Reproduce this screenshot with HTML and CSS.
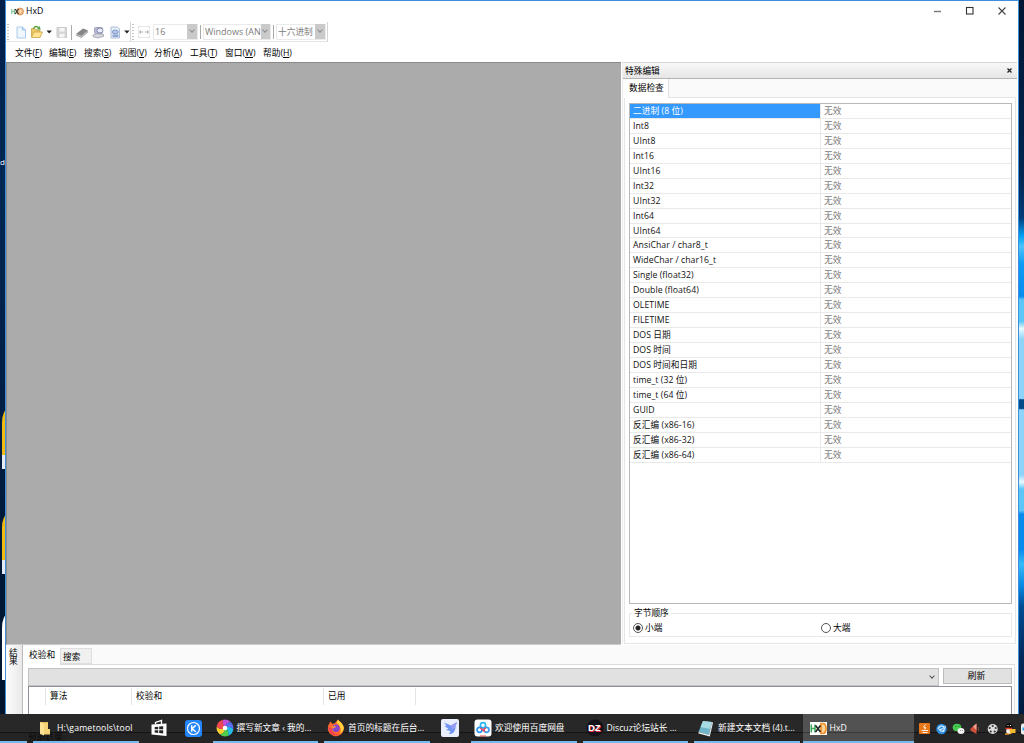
FILE: index.html
```
<!DOCTYPE html>
<html lang="zh-CN">
<head>
    <meta charset="utf-8">
    <title>HxD</title>
    <link rel="stylesheet" href="styles.css">
</head>
<body>
<div class="desktop">
    <div class="wall-left">
        <span class="shortcut-text">d</span>
        <i class="shortcut yellow s1"></i>
        <i class="shortcut yellow s2"></i>
        <i class="shortcut s3"></i>
    </div>

    <div class="window">
        <div class="titlebar">
            <svg class="app-icon" width="13" height="9" viewBox="0 0 13 9">
                <circle cx="9" cy="4.500" r="3.500" fill="#f3b47c" stroke="#cf8444" stroke-width=".7"/>
                <path d="M.8 2v5M3.400 2v5M.8 4.500h2.600" stroke="#7cc08f" stroke-width="1.100"/>
                <path d="M4 2l3.500 5M7.500 2L4 7" stroke="#333" stroke-width="1.200"/>
                <path d="M8.500 2.800c3-.4 3 3.500 0 3.200z" fill="#fde0b8"/>
            </svg>
            <span class="title">HxD</span>
            <svg class="caption-buttons" width="74" height="10" viewBox="0 0 74 10">
                <path d="M0 5.500h7" stroke="#777" stroke-width="1.400"/>
                <rect x="32.500" y="1.500" width="6.500" height="6.500" fill="none" stroke="#333" stroke-width="1.100"/>
                <path d="M64.500 1.500l7 7M71.500 1.500l-7 7" stroke="#444" stroke-width="1.100"/>
            </svg>
        </div>

        <div class="toolbars">
            <div class="toolbar file-bar">
                <svg width="120" height="16" viewBox="13.500 24 120 16">
                    <path d="M15.500 27h5.500l3 3v8h-8.500z" fill="#eef7fe" stroke="#a3c6ea" stroke-width=".9"/>
                    <path d="M21 27v3h3" fill="#b9dbf7" stroke="#8ab4de" stroke-width=".7"/>
                    <path d="M30 37v-8.500h3.500l1 1.500h4V32" fill="#ecc766" stroke="#c9a548" stroke-width=".8"/>
                    <path d="M30 37.500l2.500-5.500h8.500l-2.500 5.500z" fill="#ffe391" stroke="#c9a548" stroke-width=".8"/>
                    <path d="M32 28.500c1-2.500 4-2.500 5-.5" fill="none" stroke="#56a544" stroke-width="1.400"/>
                    <path d="M35.200 29.500h4l-1-3.500z" fill="#56a544"/>
                    <path d="M45 30.500h5.400L47.700 33.500z" fill="#222"/>
                    <path d="M55.500 27.500h9.500v10h-8.500l-1-1z" fill="#d6d6d6" stroke="#cacaca"/>
                    <path d="M58 28h5v3.500h-5zM58 34h5v3.500h-5z" fill="#f6f6f6"/>
                    <path d="M70 25v15" stroke="#aaa"/>
                    <path d="M74.500 34l7-5.500 5 2-6.500 5.500z" fill="#858585"/>
                    <path d="M74.500 34v1.700l5.500 2.300v-2zM80 36l6.500-5.500v2L80 38z" fill="#b0b0b0"/>
                    <rect x="93" y="27.500" width="8" height="6" rx="1" fill="#b6bada" stroke="#9797ad" stroke-width=".8"/>
                    <ellipse cx="98.500" cy="30.500" rx="3" ry="2.500" fill="#e9eafa" stroke="#777a9e" stroke-width=".8"/>
                    <path d="M91.500 35l4-1.500 6.500 1v2l-6 1.500-4.500-1.500z" fill="#d6d6df" stroke="#9f9fac" stroke-width=".8"/>
                    <path d="M109.500 27h6.500l2 2v9h-8.500z" fill="#e7effa" stroke="#aebfd6"/>
                    <ellipse cx="113.800" cy="32" rx="3" ry="2" fill="#b4c4e6" stroke="#7390c2" stroke-width=".8"/>
                    <path d="M111 34.500h6v2.500h-6z" fill="#8fa6d2"/>
                    <path d="M122.700 30.500h5.400l-2.700 3z" fill="#222"/>
                </svg>
            </div>
            <div class="toolbar view-bar">
                <svg width="12" height="12" viewBox="0 0 12 12">
                    <path d="M.5.500v11M11.500.500v11M.5.500h11M.5 11.500h11" stroke="#ddd" stroke-dasharray="2 1"/>
                    <path d="M1.500 6h3.500M7 6h3.500" stroke="#b4b4b4"/>
                    <path d="M1 6l2-2v4zM11 6L9 4v4z" fill="#b4b4b4"/>
                </svg>
                <div class="combo c-width"><span>16</span><i><b></b></i></div>
                <div class="combo c-charset"><span>Windows (AN</span><i><b></b></i></div>
                <div class="combo c-base"><span>十六进制</span><i><b></b></i></div>
            </div>
        </div>

        <div class="menubar">
            <span>文件(<u>F</u>)</span>
            <span>编辑(<u>E</u>)</span>
            <span>搜索(<u>S</u>)</span>
            <span>视图(<u>V</u>)</span>
            <span>分析(<u>A</u>)</span>
            <span>工具(<u>T</u>)</span>
            <span>窗口(<u>W</u>)</span>
            <span>帮助(<u>H</u>)</span>
        </div>

        <div class="main">
            <div class="mdi"></div>
            <div class="inspector">
                <div class="dock-title">
                    <span>特殊编辑</span>
                    <svg width="5" height="5" viewBox="0 0 5 5"><path d="M.5.500l4 4M4.500.500l-4 4" stroke="#222" stroke-width="1.300"/></svg>
                </div>
                <div class="tab-strip"><span class="tab">数据检查</span></div>
                <div class="tab-page">
                    <div class="data-list">
                        <div class="row selected"><span>二进制 (8 位)</span><span>无效</span></div>
                        <div class="row"><span>Int8</span><span>无效</span></div>
                        <div class="row"><span>UInt8</span><span>无效</span></div>
                        <div class="row"><span>Int16</span><span>无效</span></div>
                        <div class="row"><span>UInt16</span><span>无效</span></div>
                        <div class="row"><span>Int32</span><span>无效</span></div>
                        <div class="row"><span>UInt32</span><span>无效</span></div>
                        <div class="row"><span>Int64</span><span>无效</span></div>
                        <div class="row"><span>UInt64</span><span>无效</span></div>
                        <div class="row"><span>AnsiChar / char8_t</span><span>无效</span></div>
                        <div class="row"><span>WideChar / char16_t</span><span>无效</span></div>
                        <div class="row"><span>Single (float32)</span><span>无效</span></div>
                        <div class="row"><span>Double (float64)</span><span>无效</span></div>
                        <div class="row"><span>OLETIME</span><span>无效</span></div>
                        <div class="row"><span>FILETIME</span><span>无效</span></div>
                        <div class="row"><span>DOS 日期</span><span>无效</span></div>
                        <div class="row"><span>DOS 时间</span><span>无效</span></div>
                        <div class="row"><span>DOS 时间和日期</span><span>无效</span></div>
                        <div class="row"><span>time_t (32 位)</span><span>无效</span></div>
                        <div class="row"><span>time_t (64 位)</span><span>无效</span></div>
                        <div class="row"><span>GUID</span><span>无效</span></div>
                        <div class="row"><span>反汇编 (x86-16)</span><span>无效</span></div>
                        <div class="row"><span>反汇编 (x86-32)</span><span>无效</span></div>
                        <div class="row"><span>反汇编 (x86-64)</span><span>无效</span></div>
                    </div>
                    <div class="byte-order">
                        <span class="legend">字节顺序</span>
                        <label><i class="radio checked"></i>小端</label>
                        <label><i class="radio"></i>大端</label>
                    </div>
                </div>
            </div>
        </div>

        <div class="results">
            <div class="side-title">结果</div>
            <div class="results-body">
                <div class="results-tabs">
                    <span class="tab">校验和</span>
                    <span class="tab inactive">搜索</span>
                </div>
                <div class="results-page">
                    <div class="controls">
                        <div class="wide-combo"><b></b></div>
                        <div class="refresh">刷新</div>
                    </div>
                    <div class="sum-list">
                        <span></span>
                        <span>算法</span>
                        <span>校验和</span>
                        <span>已用</span>
                    </div>
                </div>
            </div>
        </div>
    </div>

    <div class="wall-right"></div>
</div>

<div class="taskbar">
    <span class="behind">预期结果:</span>
    <div class="task t-start"></div>
    <div class="task t-wide open">
        <svg width="18" height="18" viewBox="0 0 18 18">
            <path d="M4 3h8v12H4z" fill="#e6bd55"/><path d="M4 3l4 1.500v12L4 15z" fill="#fbe294"/><path d="M8 4h4v11.500H8zM12 10h2v5.500h-2z" fill="#f4d277"/>
        </svg>
        <span class="path">H:\gametools\tool</span>
    </div>
    <div class="task t-store">
        <svg width="18" height="18" viewBox="0 0 18 18">
            <path d="M1.500 5.500l15-1v12.500l-15-1.500z" fill="#fff"/>
            <path d="M5.500 5V3.500l6-2V5" fill="none" stroke="#fff" stroke-width="1.300"/>
            <path d="M4.700 8l3.500-.3v2.600H4.700zM9.200 7.600l4-.4v3.100h-4zM4.700 11.200h3.500v2.700l-3.500-.4zM9.200 11.200h4v3.300l-4-.4z" fill="#252525"/>
        </svg>
    </div>
    <div class="task t-k">
        <svg width="17" height="17" viewBox="0 0 17 17">
            <rect width="17" height="17" rx="3" fill="#2385fa"/>
            <circle cx="8.500" cy="8.500" r="6" fill="none" stroke="#fff" stroke-width="1.200"/>
            <path d="M6.700 5.200v6.600M10.800 5.200L7.200 8.700l3.600 3.100" fill="none" stroke="#fff" stroke-width="1.500"/>
        </svg>
    </div>
    <div class="task t-wide open">
        <svg width="18" height="18" viewBox="0 0 18 18">
            <path d="M7 .8A8.400 8.400 0 0 1 15 3.200C12 3 10 4.500 9 9 7 6 6 3.500 7 .8z" fill="#c04fd8"/>
            <path d="M15 3.200a8.400 8.400 0 0 1 2.300 7.500C15.500 8 13 7.200 9 9c1-4.500 3-6 6-5.800z" fill="#5a6cf0"/>
            <path d="M17.300 10.700a8.400 8.400 0 0 1-5.600 6.300C13 14 12.500 11.500 9 9c4-1.800 6.500-1 8.300 1.700z" fill="#25bde8"/>
            <path d="M11.700 17a8.400 8.400 0 0 1-8-1.800C7 15 8.500 13 9 9c3.500 2.500 4 5 2.700 8z" fill="#4fcd4c"/>
            <path d="M3.700 15.200A8.400 8.400 0 0 1 .7 7.500C3 10.200 5 10.500 9 9c-.5 4-2 6-5.300 6.200z" fill="#f8cf33"/>
            <path d="M.7 7.500A8.400 8.400 0 0 1 7 .8C6 3.500 7 6 9 9c-4 1.500-6 1.200-8.300-1.500z" fill="#f3484f"/>
            <circle cx="9" cy="9" r="2.300" fill="#fff"/>
        </svg>
        <span>撰写新文章 ‹ 我的...</span>
    </div>
    <div class="task t-wide open">
        <svg width="18" height="18" viewBox="0 0 18 18">
            <path d="M2 5l1.500-2.500L5.500 5 8 4l3-3.500c1 2 5 3.500 5.800 8A8 8 0 1 1 2 5z" fill="#ff6a2b"/>
            <path d="M11 .5c1 2 5 3.500 5.800 8 0 3-2 5-3.500 6C15 9 12 5 9.500 4z" fill="#ffd33c"/>
            <path d="M1.500 8c.2 7 6 10 11 7.500-5 0-8-2-8-6z" fill="#f23b58"/>
            <circle cx="9" cy="9.300" r="3.700" fill="#8546cf"/>
            <path d="M4.500 7.500L9 7c0 1.500-2.500 1.500-2.500 3z" fill="#ff9e33"/>
        </svg>
        <span>首页的标题在后台...</span>
    </div>
    <div class="task t-bird">
        <svg width="18" height="18" viewBox="0 0 18 18">
            <rect width="18" height="18" rx="2" fill="#e9eefc"/>
            <path d="M3 3.500l7 3 6-3.500-1.500 4.500c0 5-2.500 7.500-6.500 7.500l1.500-3-4.500-1 2.500-1.500-4-2 2-.5z" fill="#6f94f4"/>
            <path d="M10 6.500L16 3l-1.500 4.500L11 11z" fill="#9a9cf8"/>
        </svg>
    </div>
    <div class="task t-wide open">
        <svg width="18" height="18" viewBox="0 0 18 18">
            <rect x=".5" y=".5" width="17" height="17" rx="3" fill="#fff"/>
            <circle cx="9" cy="6.200" r="2.600" fill="none" stroke="#27b9f3" stroke-width="1.700"/>
            <circle cx="5.500" cy="10.800" r="2.500" fill="none" stroke="#2b95f6" stroke-width="1.700"/>
            <circle cx="12.500" cy="10.800" r="2.500" fill="none" stroke="#3b9cf5" stroke-width="1.700"/>
            <path d="M6.500 9.200l4.500 3.500M11.500 8.800L9.500 11" stroke="#f0495b" stroke-width="1.500"/>
            <path d="M6 17h6" stroke="#e64545"/>
        </svg>
        <span>欢迎使用百度网盘</span>
    </div>
    <div class="task t-wide open">
        <svg width="18" height="18" viewBox="0 0 18 18">
            <circle cx="9" cy="9" r="8.500" fill="#141018"/>
            <text x="2.600" y="12.800" class="dz-red">DZ</text>
            <text x="2" y="12.400" class="dz">DZ</text>
        </svg>
        <span>Discuz论坛站长 ...</span>
    </div>
    <div class="task t-wide open">
        <svg width="18" height="18" viewBox="0 0 18 18">
            <path d="M6 2l9 1-3 13.500L1.500 13z" fill="#6fb4c8"/><path d="M6 2l9 1-2 7-9.500-2z" fill="#a9dbe4"/>
            <path d="M1.500 13L12 16l3-13 1 .8-3.200 13.700L1.500 14.500z" fill="#eee"/>
        </svg>
        <span>新建文本文档 (4).t...</span>
    </div>
    <div class="task t-hxd open">
        <svg width="17" height="13" viewBox="0 0 17 13">
            <rect width="17" height="13" fill="#fff"/>
            <path d="M1.300 2.500v8M5 2.500v8M1.300 6.500H5" stroke="#35a857" stroke-width="1.500"/>
            <path d="M11 1.500h2c4 0 4 10 0 10h-2z" fill="#fbd29a" stroke="#f09125" stroke-width="1.700"/>
            <path d="M5.500 3.500l5 6.500M10.500 3.500l-5 6.500" stroke="#222" stroke-width="1.600"/>
        </svg>
        <span>HxD</span>
    </div>
    <svg class="tray" width="106" height="14" viewBox="918 722 106 14">
        <rect x="919" y="723" width="11" height="11" rx="1" fill="#e87817"/>
        <path d="M925.500 724.500l-2 2.500 2.500 1-2 1.500M921.500 730.500h6.500M922.500 732.500h5" fill="none" stroke="#fff" stroke-width=".9"/>
        <circle cx="941.500" cy="729" r="5.200" fill="#2e8fe0"/>
        <path d="M938 729c1-3 5-4 5.500-2s-3 2.500-4 2.500c1 2.500 3.500 2 5 .5M943 732l2.500-6" fill="none" stroke="#d9f1ff" stroke-width="1.100"/>
        <ellipse cx="957" cy="727.500" rx="4.300" ry="3.700" fill="#44cb4d"/>
        <ellipse cx="961" cy="731" rx="3.500" ry="3" fill="#f2f2f2"/>
        <path d="M955.500 726.500h.8M958.500 726.500h.8" stroke="#185e24"/>
        <path d="M960 730.500h.7M962 730.500h.7" stroke="#777"/>
        <path d="M970.500 728.500l6-5v10.500L970.500 730.500z" fill="#ce4f3b"/><path d="M973 726.500l3.500-3v7z" fill="#f4a18c"/>
        <path d="M978.500 727v4" stroke="#803b31"/>
        <circle cx="992.700" cy="729" r="5" fill="#dedede"/>
        <g fill="#333"><circle cx="992.700" cy="726" r="1.100"/><circle cx="995.700" cy="728" r="1.100"/><circle cx="994.700" cy="731.500" r="1.100"/><circle cx="990.700" cy="731.500" r="1.100"/><circle cx="989.700" cy="728" r="1.100"/></g>
        <ellipse cx="1009" cy="728" rx="3.500" ry="4.800" fill="#0b0b0b"/>
        <ellipse cx="1009" cy="731" rx="2.800" ry="3" fill="#f4f4f4"/>
        <path d="M1007.500 725.500h1M1010 725.500h1" stroke="#fff"/>
        <path d="M1005.500 728.500h6.500" stroke="#e53d2b" stroke-width="1.600"/>
        <path d="M1009.500 729h6v4h-3.500l-2 1.500z" fill="#f6b82c"/><path d="M1005 734h4" stroke="#f0a020" stroke-width="1.400"/>
        <rect x="1021" y="723.500" width="8" height="11" rx="2" fill="#eee"/><path d="M1022.500 729h3" stroke="#2aa3e8" stroke-width="3"/>
    </svg>
</div>
</body>
</html>
```
FILE: styles.css
```
* {
    box-sizing: border-box;
}
body {
    margin: 0;
    width: 1024px;
    height: 743px;
    overflow: hidden;
    background: #242424;
    color: #000;
    font-family: "Open Sans", "Noto Sans CJK SC", sans-serif;
    font-size: 8.7px;
    line-height: 12px;
    white-space: nowrap;
}
i, b {
    font-style: normal;
    font-weight: normal;
}
svg {
    display: block;
    flex: none;
}
.desktop {
    display: flex;
    height: 714px;
}

/* wallpaper on both sides of the window */
.wall-left {
    position: relative;
    width: 5px;
    overflow: hidden;
    background: linear-gradient(#00204a, #012754 25%, #001d42 60%, #00142c);
}
.wall-right {
    flex: 1;
    background: linear-gradient(#001633, #00254f 24%, #003c78 30.500%, #00a0f4 33%, #4fc3fa 34.500%, #0d9bf5 37%, #078cee 41.500%, #5cc6f8 42%, #5cc6f8 45%, #e8faff 46%, #8ed4fa 47.500%, #8ed4fa 55.800%, #054b88 56%, #054b88 57.200%, #8ed4fa 57.400%, #8ed4fa 66.500%, #e8faff 67.500%, #5cc6f8 68.500%, #5cc6f8 71.500%, #078cee 72%, #078cee 77%, #37b9f8 79%, #0989e4 82%, #004c92 85%, #002a5c 92%, #001a3c);
}
.shortcut {
    position: absolute;
    left: 2px;
    width: 8px;
    height: 60px;
    background: #fff;
    border-top-left-radius: 6px 14px;
}
.shortcut.yellow {
    background: linear-gradient(#f2bb13 77%, #e6eaf2 77%);
}
.s1 { top: 409px; }
.s2 { top: 514px; }
.s3 { top: 614px; height: 66px; }
.shortcut-text {
    position: absolute;
    left: 0;
    top: 156px;
    color: #fff;
    font-size: 8px;
}

.window {
    display: flex;
    flex-direction: column;
    width: 1014px;
    background: #fff;
    border: 1px solid #3d8fdc;
    border-bottom: 0;
}
.titlebar {
    display: flex;
    align-items: center;
    height: 21px;
    padding: 0 10px 1px 5px;
}
.title {
    margin-left: 2px;
}
.caption-buttons {
    margin-left: auto;
}

/* toolbars */
.toolbars {
    display: flex;
    height: 20px;
}
.toolbar {
    position: relative;
    display: flex;
    align-items: center;
    border-right: 1px solid #d5d5d5;
    border-bottom: 1px solid #e4e4e4;
}
.toolbar::before {
    content: "";
    flex: none;
    width: 2px;
    height: 16px;
    margin: 0 6px 0 1px;
    background: repeating-linear-gradient(#c4c4c4 0 1px, #fff 1px 3px);
}
.file-bar {
    width: 125px;
}
.view-bar {
    width: 197px;
}
.view-bar::before {
    margin-right: 4px;
}
.combo {
    display: flex;
    align-items: center;
    height: 16px;
    border: 1px solid #eaeaea;
    color: #7c7c7c;
    font-size: 9px;
}
.combo span {
    flex: 1;
}
.combo i {
    display: flex;
    justify-content: center;
    width: 10px;
    height: 15px;
    padding-top: 4px;
    background: #cacaca;
}
.combo b, .wide-combo b {
    width: 4px;
    height: 4px;
    border: solid #8b8b8b;
    border-width: 0 1px 1px 0;
    transform: rotate(45deg);
}
.c-width {
    width: 45px;
    margin-left: 3px;
    padding-left: 1px;
}
.c-charset {
    width: 68px;
    margin-left: 5px;
    padding-left: 1px;
}
.c-base {
    width: 50px;
    margin-left: 5px;
    padding-left: 1px;
    font-size: 8.7px;
}
.c-charset, .c-base {
    box-shadow: -3px 0 0 -1px #fff, -4px 0 0 -1px #aaa;
}
.menubar {
    display: grid;
    grid-template-columns: 34px 35px 35px 35px 36px 35px 38px auto;
    align-items: center;
    height: 20px;
    padding: 1px 0 0 9px;
}
.menubar u {
    text-underline-offset: 1px;
}

/* main area */
.main {
    display: flex;
    height: 583px;
}
.mdi {
    width: 615px;
    background: #ababab;
    border-top: 1px solid #8a8a8a;
    border-left: 1px solid #8a8a8a;
    border-bottom: 1px solid #ccc;
}
.inspector {
    display: flex;
    flex-direction: column;
    flex: 1;
    margin: 0 1px 1px 1px;
    border-left: 1px solid #eee;
    background: #fafafa;
}
.dock-title {
    display: flex;
    align-items: center;
    justify-content: space-between;
    height: 17px;
    padding: 0 5px 0 2px;
    background: linear-gradient(#f8f8f8, #e6e6e6);
    border-top: 1px solid #d6d6d6;
    border-bottom: 1px solid #b5b5b5;
}
.tab-strip {
    display: flex;
    height: 18px;
    padding-left: 1px;
    background: #fafafa;
}
.tab-strip .tab {
    z-index: 1;
    height: 19px;
    width: 45px;
    padding: 3px 0 0 5px;
    background: #fff;
    border-right: 1px solid #dedede;
}
.tab-page {
    flex: 1;
    margin: 0 1px 0 1px;
    padding: 5px 3px 0 4px;
    background: #fff;
    border: 1px solid #e5e5e5;
}
.data-list {
    height: 501px;
    border: 1px solid #b9b9b9;
}
.row {
    display: grid;
    grid-template-columns: 191px 1fr;
    height: 14.94px;
    line-height: 15px;
    border-bottom: 1px solid #e9e9e9;
}
.row span {
    height: 14px;
    padding-left: 3px;
    color: #111;
}
.row span:first-child {
    border-right: 1px solid #e9e9e9;
    letter-spacing: .06px;
}
.row span:last-child {
    color: #777;
}
.row.selected span:first-child {
    color: #fff;
    background: #3399ff;
}
.byte-order {
    position: relative;
    display: flex;
    height: 24px;
    margin-top: 9px;
    padding: 8px 0 0 3px;
    border: 1px solid #e8e8e8;
}
.legend {
    position: absolute;
    left: 2px;
    top: -7px;
    padding: 0 2px;
    background: #fff;
}
.byte-order label {
    display: flex;
    align-items: center;
    width: 188px;
    height: 12px;
}
.radio {
    width: 10px;
    height: 10px;
    margin-right: 2px;
    border: 1px solid #555;
    border-radius: 50%;
}
.radio.checked {
    background: radial-gradient(circle, #222 2px, #fff 3px);
}

/* results panel */
.results {
    display: flex;
    flex: 1;
    background: #fafafa;
}
.side-title {
    width: 17px;
    padding: 4px 5px 0 3px;
    line-height: 8px;
    white-space: normal;
    word-break: break-all;
    background: linear-gradient(90deg, #fcfcfc, #e9e9e9);
    border-right: 1px solid #bbb;
}
.results-body {
    display: flex;
    flex-direction: column;
    flex: 1;
}
.results-tabs {
    display: flex;
    align-items: flex-end;
    height: 19px;
}
.results-tabs .tab {
    z-index: 1;
    width: 37px;
    height: 18px;
    padding: 2px 0 0 6px;
    background: #fff;
    margin-bottom: -1px;
}
.results-tabs .inactive {
    width: 32px;
    height: 16px;
    margin-bottom: 0;
    padding: 2px 0 0 2px;
    background: #f0f0f0;
    border: 1px solid #dedede;
}
.results-page {
    display: flex;
    flex-direction: column;
    flex: 1;
    padding: 3px 2px 0 5px;
    margin-right: 3px;
    background: #fff;
    border-top: 1px solid #dcdcdc;
    border-right: 1px solid #e3e3e3;
}
.controls {
    display: flex;
    gap: 4px;
    height: 18px;
}
.wide-combo {
    display: flex;
    justify-content: flex-end;
    flex: 1;
    padding: 5px 4px 0 0;
    background: #e1e1e1;
    border: 1px solid #c3c3c3;
}
.wide-combo b {
    border-color: #555;
}
.refresh {
    width: 69px;
    height: 16px;
    padding-right: 2px;
    line-height: 15px;
    text-align: center;
    background: #e1e1e1;
    border: 1px solid #bcbcbc;
}
.sum-list {
    display: grid;
    grid-template-columns: 17px 86px 192px 92px;
    flex: 1;
    border: 1px solid #8f8f99;
    border-bottom: 0;
}
.sum-list span {
    height: 17px;
    margin-top: 1px;
    padding: 2px 0 0 4px;
    border-right: 1px solid #e3e3e3;
}

/* taskbar */
.taskbar {
    position: relative;
    display: flex;
    align-items: stretch;
    height: 29px;
    color: #fff;
    background: linear-gradient(#282828 18px, #141414 18px, #141414 19px, #242424 19px);
}
/* label of the window below, dimmed by the translucent bar */
.behind {
    position: absolute;
    left: 28px;
    top: 19px;
    width: 40px;
    height: 8px;
    line-height: 10px;
    color: #0c0c0c;
}
.task {
    position: relative;
    display: flex;
    align-items: center;
    flex: none;
    border-bottom: 2px solid transparent;
    padding-top: 1px;
}
.task span {
    margin-left: 3px;
}
.task .path {
    letter-spacing: .15px;
}
.task.open, .t-start {
    border-bottom-color: #76b9ed;
}
.t-start {
    width: 27px;
    margin-right: 6px;
}
.t-wide {
    width: 105.5px;
    padding-left: 3px;
    margin-right: 6px;
}
.t-store {
    width: 40px;
    padding-left: 5px;
}
.t-k {
    width: 28px;
}
.t-bird {
    width: 35.5px;
    padding-left: 5px;
}
.t-hxd {
    width: 111px;
    padding-left: 7px;
    margin-left: -3px;
    background: linear-gradient(#525252 18px, #383838 18px, #383838 19px, #4e4e4e 19px);
}
.dz, .dz-red {
    fill: #fff;
    font: bold 9.500px "Liberation Sans", sans-serif;
}
.dz-red {
    fill: #e4304f;
}
.tray {
    margin: 8px 0 0 auto;
}
```
